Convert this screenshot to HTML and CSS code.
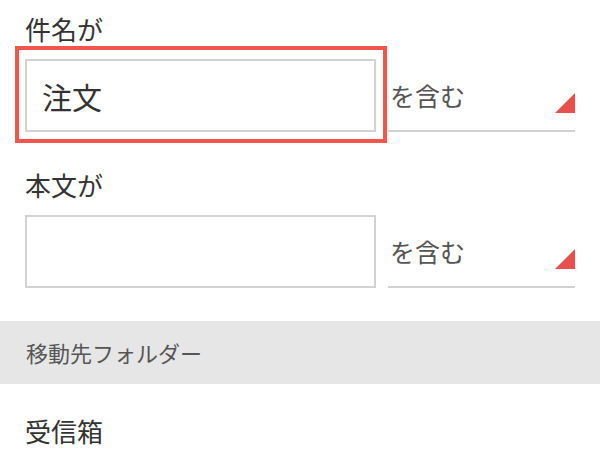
FILE: index.html
```html
<!DOCTYPE html>
<html lang="ja">
<head>
<meta charset="utf-8">
<title>フィルタ</title>
<link rel="stylesheet" href="styles.css">
</head>
<body>
<div class="page">
  <section class="field">
    <div class="label">件名が</div>
    <div class="row">
      <div class="input-wrap">
        <div class="input">注文</div>
        <div class="highlight"></div>
      </div>
      <div class="select">
        <span class="select-text">を含む</span>
        <svg class="caret" width="20" height="20" viewBox="0 0 20 20"><polygon points="20,0 20,20 0,20" fill="#e8504e"/></svg>
      </div>
    </div>
  </section>
  <section class="field">
    <div class="label">本文が</div>
    <div class="row">
      <div class="input-wrap">
        <div class="input"></div>
      </div>
      <div class="select">
        <span class="select-text">を含む</span>
        <svg class="caret" width="20" height="20" viewBox="0 0 20 20"><polygon points="20,0 20,20 0,20" fill="#e8504e"/></svg>
      </div>
    </div>
  </section>
  <div class="section-bar">移動先フォルダー</div>
  <div class="item">受信箱</div>
</div>
</body>
</html>
```
FILE: styles.css
```css
html, body {
  margin: 0;
  padding: 0;
  background: #ffffff;
}
body {
  font-family: "Noto Sans CJK JP", "Noto Sans", sans-serif;
  color: #333333;
}
.page {
  width: 600px;
}
.field {
  padding: 11px 25px 24px 25px;
}
.label {
  font-size: 26px;
  line-height: 36px;
  height: 36px;
  margin-bottom: 12px;
  color: #333333;
}
.row {
  display: flex;
  gap: 12px;
}
.input-wrap {
  flex: 0 0 351px;
  position: relative;
}
.input {
  box-sizing: border-box;
  height: 73px;
  border: 2px solid #d2d2d2;
  padding-left: 15px;
  font-size: 30px;
  display: flex;
  align-items: center;
  color: #333333;
}
.highlight {
  position: absolute;
  left: -10px;
  top: -13px;
  width: 372px;
  height: 97px;
  box-sizing: border-box;
  border: 4px solid #f2554a;
  pointer-events: none;
}
.select {
  flex: 1;
  box-sizing: border-box;
  height: 73px;
  border-bottom: 2px solid #d2d2d2;
  display: flex;
  justify-content: space-between;
  align-items: center;
  padding: 0 0 0 2px;
}
.select-text {
  font-size: 25px;
  color: #555555;
}
.caret {
  align-self: flex-end;
  margin-bottom: 17px;
  display: block;
}
.section-bar {
  margin-top: 9px;
  height: 63px;
  line-height: 63px;
  background: #e6e6e6;
  padding-left: 26px;
  font-size: 22px;
  color: #555555;
}
.item {
  margin-top: 29px;
  padding-left: 25px;
  font-size: 26px;
  line-height: 36px;
  color: #333333;
}
```
